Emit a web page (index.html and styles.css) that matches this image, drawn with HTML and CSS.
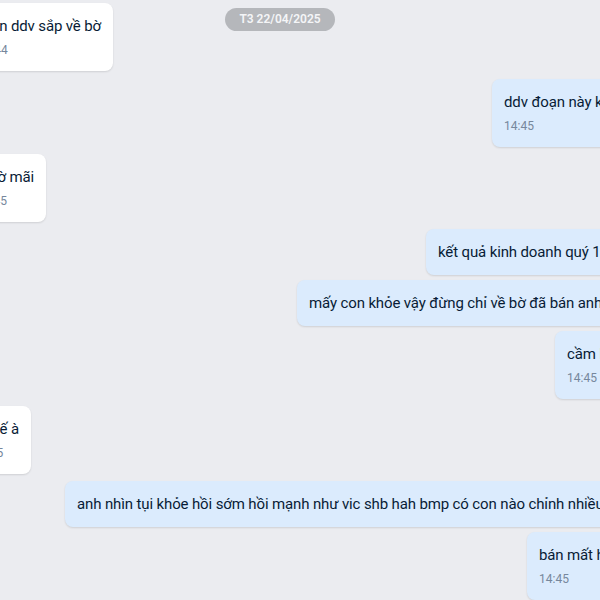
FILE: index.html
```html
<!DOCTYPE html>
<html lang="vi">
<head>
<meta charset="utf-8">
<link rel="stylesheet" href="styles.css">
</head>
<body>
<div class="chat">
  <div class="date-pill">T3 22/04/2025</div>

  <div class="row in r1">
    <div class="msg recv"><div class="text">Mòn ddv sắp về bờ</div><div class="time">14:44</div></div>
  </div>
  <div class="row out s1">
    <div class="msg sent"><div class="text">ddv đoạn này khỏe quá</div><div class="time">14:45</div></div>
  </div>
  <div class="row in r2">
    <div class="msg recv"><div class="text">ở bờ mãi</div><div class="time">14:45</div></div>
  </div>
  <div class="row out s2">
    <div class="msg sent"><div class="text">kết quả kinh doanh quý 1 tốt</div></div>
  </div>
  <div class="row out s3 grouped">
    <div class="msg sent"><div class="text">mấy con khỏe vậy đừng chỉ về bờ đã bán anh ơi</div></div>
  </div>
  <div class="row out s4 grouped">
    <div class="msg sent"><div class="text">cầm lâu</div><div class="time">14:45</div></div>
  </div>
  <div class="row in r3">
    <div class="msg recv"><div class="text">À thế à</div><div class="time">14:45</div></div>
  </div>
  <div class="row out s5">
    <div class="msg sent"><div class="text">anh nhìn tụi khỏe hồi sớm hồi mạnh như vic shb hah bmp có con nào chỉnh nhiều đâu</div></div>
  </div>
  <div class="row out s6 grouped">
    <div class="msg sent"><div class="text">bán mất hàng</div><div class="time">14:45</div></div>
  </div>
</div>
</body>
</html>
```

FILE: styles.css
```css
html, body {
  margin: 0;
  padding: 0;
  background: #ebecf0;
  overflow: hidden;
}

body {
  font-family: Roboto, "Noto Sans", sans-serif;
  color: #081c36;
}

.chat {
  position: relative;
  width: 600px;
  height: 600px;
  overflow: hidden;
  display: flex;
  flex-direction: column;
  padding-top: 3px;
  box-sizing: border-box;
}

.date-pill {
  position: absolute;
  top: 8px;
  left: 225px;
  width: 110px;
  height: 23px;
  border-radius: 12px;
  background: #b5b7bb;
  color: #f4f5f7;
  font-size: 12px;
  font-weight: 600;
  line-height: 23px;
  text-align: center;
  z-index: 2;
}

.row {
  display: flex;
  flex-shrink: 0;
  margin-top: 7px;
}

.row.grouped { margin-top: 5px; }
.row.r1 { margin-top: 0; }
.row.s1 { margin-top: 8px; }

.row.in { justify-content: flex-end; }
.row.out { justify-content: flex-start; }

.r1 { width: 113px; }
.r2 { width: 46px; }
.r3 { width: 31px; }

.s1 { padding-left: 492px; }
.s2 { padding-left: 426px; }
.s3 { padding-left: 297px; }
.s4 { padding-left: 555px; }
.s5 { padding-left: 65px; }
.s6 { padding-left: 527px; }

.msg {
  flex-shrink: 0;
  padding: 13px 12px 12px;
  border-radius: 8px;
  white-space: nowrap;
  box-shadow: 0 1px 2px rgba(0, 0, 0, 0.12);
}

.recv { background: #ffffff; }
.sent { background: #dbebfd; }

.text {
  font-size: 15px;
  line-height: 21px;
  letter-spacing: -0.13px;
}

.time {
  margin-top: 5px;
  margin-bottom: 1px;
  font-size: 12px;
  line-height: 16px;
  color: #76879c;
}
```
